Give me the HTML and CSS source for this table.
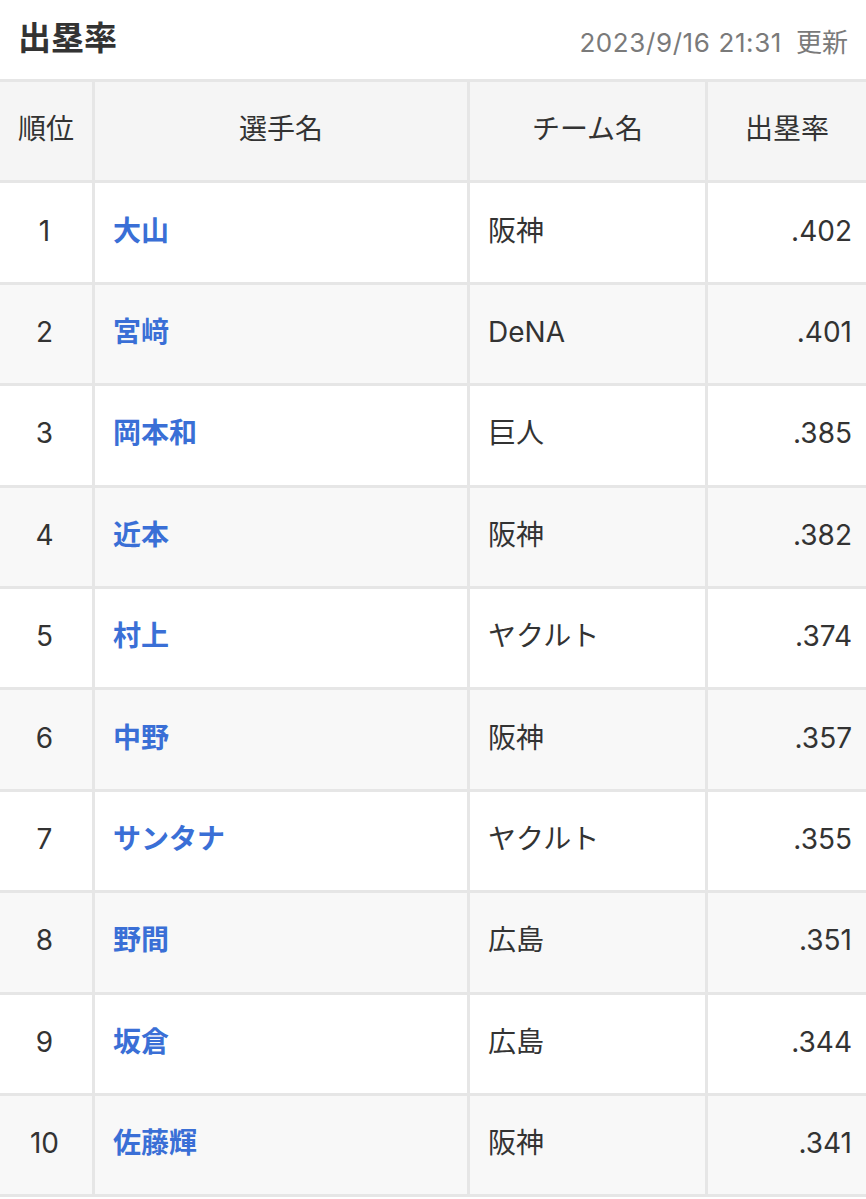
FILE: index.html
```html
<!DOCTYPE html>
<html lang="ja">
<head>
<meta charset="utf-8">
<link rel="stylesheet" href="styles.css">
</head>
<body>
<div class="page">
  <div class="head">
    <h1 class="title">出塁率</h1>
    <div class="updated">2023/9/16 21:31<span class="upd-label">更新</span></div>
  </div>
  <table class="rank">
    <thead>
      <tr>
        <th class="c-rank">順位</th>
        <th class="c-name">選手名</th>
        <th class="c-team">チーム名</th>
        <th class="c-val">出塁率</th>
      </tr>
    </thead>
    <tbody>
      <tr><td class="c-rank">1</td><td class="c-name"><a href="#">大山</a></td><td class="c-team">阪神</td><td class="c-val">.402</td></tr>
      <tr><td class="c-rank">2</td><td class="c-name"><a href="#">宮﨑</a></td><td class="c-team">DeNA</td><td class="c-val">.401</td></tr>
      <tr><td class="c-rank">3</td><td class="c-name"><a href="#">岡本和</a></td><td class="c-team">巨人</td><td class="c-val">.385</td></tr>
      <tr><td class="c-rank">4</td><td class="c-name"><a href="#">近本</a></td><td class="c-team">阪神</td><td class="c-val">.382</td></tr>
      <tr><td class="c-rank">5</td><td class="c-name"><a href="#">村上</a></td><td class="c-team">ヤクルト</td><td class="c-val">.374</td></tr>
      <tr><td class="c-rank">6</td><td class="c-name"><a href="#">中野</a></td><td class="c-team">阪神</td><td class="c-val">.357</td></tr>
      <tr><td class="c-rank">7</td><td class="c-name"><a href="#">サンタナ</a></td><td class="c-team">ヤクルト</td><td class="c-val">.355</td></tr>
      <tr><td class="c-rank">8</td><td class="c-name"><a href="#">野間</a></td><td class="c-team">広島</td><td class="c-val">.351</td></tr>
      <tr><td class="c-rank">9</td><td class="c-name"><a href="#">坂倉</a></td><td class="c-team">広島</td><td class="c-val">.344</td></tr>
      <tr><td class="c-rank">10</td><td class="c-name"><a href="#">佐藤輝</a></td><td class="c-team">阪神</td><td class="c-val">.341</td></tr>
    </tbody>
  </table>
</div>
</body>
</html>
```

FILE: styles.css
```css
html, body {
  margin: 0;
  padding: 0;
  background: #ffffff;
}

body {
  font-family: Inter, "Noto Sans CJK JP", "Noto Sans", sans-serif;
  color: #333333;
}

.page {
  width: 866px;
}

.head {
  height: 79px;
  display: flex;
  align-items: center;
  justify-content: space-between;
  padding: 0 18px 0 18px;
  box-sizing: border-box;
}

.title {
  margin: 0;
  font-size: 33px;
  font-weight: 700;
  color: #333333;
  line-height: 1;
  padding-bottom: 2px;
}

.updated {
  font-size: 26px;
  font-weight: 400;
  color: #7a7a7a;
  line-height: 1;
  padding-top: 6px;
  letter-spacing: 0.6px;
}

.upd-label {
  margin-left: 14px;
  letter-spacing: 0;
}

.rank {
  width: 866px;
  border-collapse: separate;
  border-spacing: 0;
  table-layout: fixed;
  border-top: 3px solid #e6e6e6;
}

.rank th,
.rank td {
  box-sizing: border-box;
  height: 101.4px;
  padding: 0 0 4px 0;
  font-size: 28px;
  font-weight: 400;
  color: #333333;
  border-bottom: 3px solid #e6e6e6;
  border-right: 3px solid #e6e6e6;
  vertical-align: middle;
  line-height: 1;
}

.rank th {
  background: #f5f5f5;
  text-align: center;
}

.rank tbody tr:nth-child(even) td {
  background: #f8f8f8;
}

.rank .c-val {
  border-right: none;
}

.rank th.c-rank { width: 95px; }
.rank th.c-name { width: 375px; }
.rank th.c-team { width: 238px; }
.rank th.c-val { width: 158px; }

.rank td.c-rank {
  text-align: center;
  padding-right: 3px;
}

.rank td.c-name {
  padding-left: 18px;
}

.rank td.c-name a {
  color: #3a6fd6;
  font-weight: 700;
  text-decoration: none;
}

.rank td.c-team {
  padding-left: 18px;
}

.rank td.c-val {
  text-align: right;
  padding-right: 14px;
}
```
